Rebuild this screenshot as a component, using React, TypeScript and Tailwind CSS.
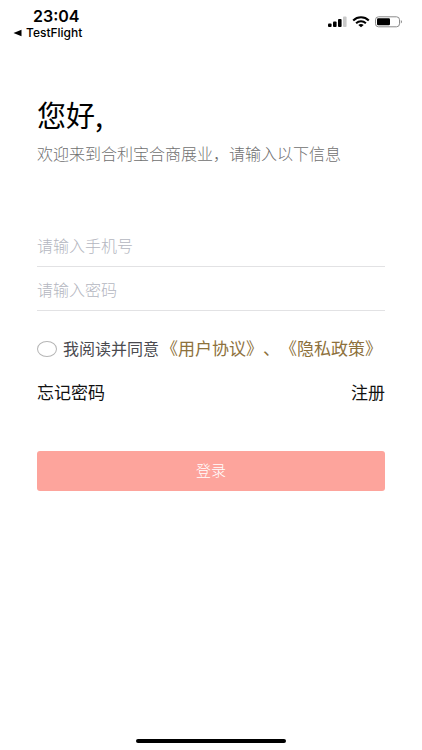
import { useState } from "react";

function SignalIcon() {
  return (
    <svg width="19" height="12" viewBox="0 0 19 12" aria-hidden="true">
      <rect x="0" y="7.5" width="3.6" height="3.5" rx="1" fill="#000" />
      <rect x="5" y="5.5" width="3.6" height="5.5" rx="1" fill="#000" />
      <rect x="10" y="3" width="3.6" height="8" rx="1" fill="#000" />
      <rect x="15" y="0.5" width="3.6" height="10.5" rx="1" fill="#c9c9c9" />
    </svg>
  );
}

function WifiIcon() {
  return (
    <svg width="18" height="12" viewBox="0 0 18 12" fill="none" aria-hidden="true">
      <path d="M1.2 4.4C5.6 0.2 12.4 0.2 16.8 4.4" stroke="#000" strokeWidth="2.1" />
      <path d="M4.1 7.2C6.9 4.6 11.1 4.6 13.9 7.2" stroke="#000" strokeWidth="2" />
      <path d="M6.3 8.9C7.9 7.6 10.1 7.6 11.7 8.9L9 11.2Z" fill="#000" />
    </svg>
  );
}

function BatteryIcon() {
  return (
    <svg width="28" height="12" viewBox="0 0 28 12" aria-hidden="true">
      <rect x="0.5" y="0.8" width="24" height="10" rx="3" fill="#fff" stroke="#8a8a8a" />
      <rect x="2" y="2.3" width="13" height="7" rx="1.2" fill="#000" />
      <path d="M25.8 4C27.4 4.6 27.4 7 25.8 7.6Z" fill="#8a8a8a" />
    </svg>
  );
}

function StatusBar() {
  return (
    <header className="flex items-start justify-between pt-2 pr-[19px] pl-3 font-['Inter',sans-serif] text-black">
      <div>
        <p className="pl-[21px] text-base leading-4 font-semibold">23:04</p>
        <a href="#testflight" className="mt-[3px] flex items-center gap-1 text-[12px] leading-3 font-medium">
          <svg width="10" height="8" viewBox="0 0 10 8" aria-hidden="true">
            <path d="M1.5 4L9.5 0.8V7.2Z" fill="#000" />
          </svg>
          TestFlight
        </a>
      </div>
      <div className="flex items-center gap-[5px] pt-2">
        <SignalIcon />
        <WifiIcon />
        <BatteryIcon />
      </div>
    </header>
  );
}

const fields = [
  { id: "phone", type: "tel", placeholder: "请输入手机号" },
  { id: "password", type: "password", placeholder: "请输入密码" },
];

export default function App() {
  const [agreed, setAgreed] = useState(false);

  return (
    <div className="flex min-h-screen flex-col bg-white font-['Noto_Sans_CJK_SC',sans-serif]">
      <StatusBar />

      <main className="flex-1 px-[37px] pt-[55px]">
        <h1 className="text-[29px] leading-10 text-black">您好,</h1>
        <p className="mt-[7px] text-base leading-6 font-light whitespace-nowrap text-[#6f6f6f]">
          欢迎来到合利宝合商展业，请输入以下信息
        </p>

        <form className="mt-[58px]" onSubmit={(e) => e.preventDefault()}>
          {fields.map((field) => (
            <input
              key={field.id}
              id={field.id}
              type={field.type}
              placeholder={field.placeholder}
              aria-label={field.placeholder}
              className="block h-11 w-full border-b border-[#e2e2e4] text-base font-light text-black outline-none placeholder:text-[#b4b6c0]"
            />
          ))}

          <div className="mt-[25px] flex items-center whitespace-nowrap">
            <input
              id="agree"
              type="checkbox"
              checked={agreed}
              onChange={(e) => setAgreed(e.target.checked)}
              className="h-4 w-5 shrink-0 appearance-none rounded-[50%] border border-[#b5b5b5] checked:bg-[#fda49c]"
            />
            <label htmlFor="agree" className="ml-1.5 pb-0.5 text-base leading-6 text-[#4a4a4f]">
              我阅读并同意
            </label>
            {/* keep the quote marks full width */}
            <span className="ml-0.5 pb-0.5 text-[17px] leading-6 text-[#8d713c] [text-spacing-trim:space-all]">
              <a href="#agreement">《用户协议》</a>、<a href="#privacy">《隐私政策》</a>
            </span>
          </div>

          <div className="mt-4 flex justify-between text-[17px] leading-7 text-[#111]">
            <a href="#forgot">忘记密码</a>
            <a href="#register">注册</a>
          </div>

          <button
            type="submit"
            className="mt-[45px] h-10 w-full rounded-[3px] bg-[#fda49c] pb-0.5 text-[15px] font-light text-white"
          >
            登录
          </button>
        </form>
      </main>

      <footer className="flex justify-center pb-[7px]">
        <div className="h-1 w-[150px] rounded-full bg-black" />
      </footer>
    </div>
  );
}
